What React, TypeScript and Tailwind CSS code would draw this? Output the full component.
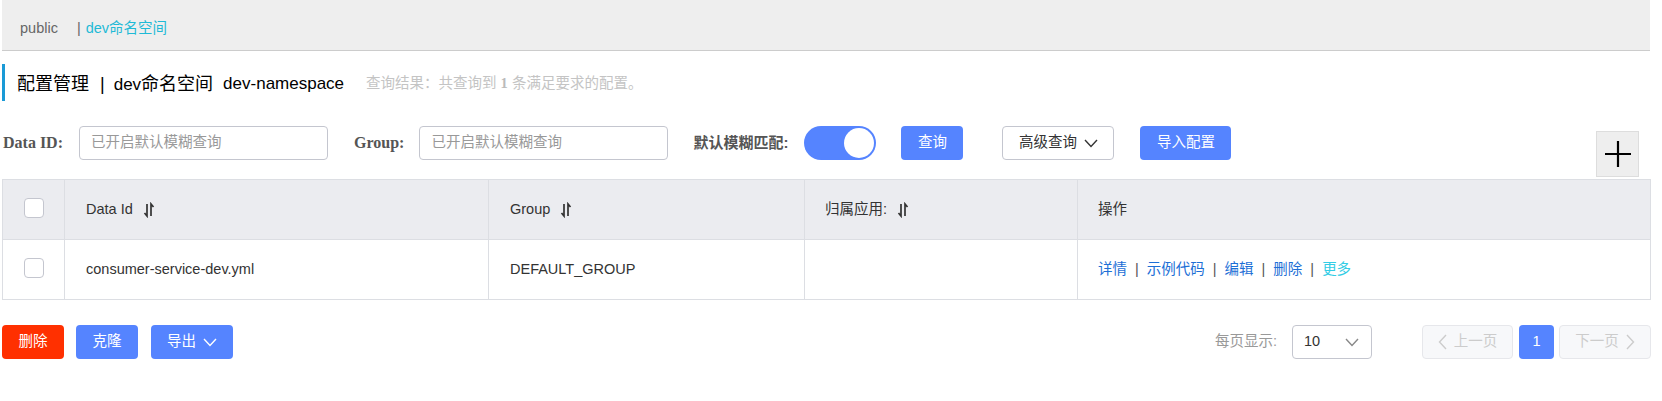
import React from "react";

const SortIcon = () => (
  <svg width="12" height="16" viewBox="0 0 12 16" className="inline-block ml-[10px]" fill="none">
    <path d="M4 2 V14 L1.5 11" stroke="#333" strokeWidth="1.7" />
    <path d="M8 14 V2 L10.5 5" stroke="#333" strokeWidth="1.7" />
  </svg>
);

const Chevron = ({ color = "#333", className = "" }: { color?: string; className?: string }) => (
  <svg width="14" height="9" viewBox="0 0 14 9" fill="none" className={className}>
    <path d="M1 1 L7 7.5 L13 1" stroke={color} strokeWidth="1.4" />
  </svg>
);

const Checkbox = () => (
  <div className="w-[20px] h-[20px] rounded-[4px] border border-[#c4c6cf] bg-white" />
);

const App: React.FC = () => {
  const links = ["详情", "示例代码", "编辑", "删除"];

  return (
    <div
      className="w-[1662px] h-[401px] bg-white text-[14.5px] text-[#333]"
      style={{ fontFamily: '"Liberation Sans", "Noto Sans CJK SC", sans-serif' }}
    >
      {/* namespace bar */}
      <div className="ml-[2px] w-[1648px] h-[51px] bg-[#eeeeee] border-b border-[#cccccc] flex items-center pl-[18px] pt-[7px]">
        <span className="text-[#666]">public</span>
        <span className="ml-[19px] text-[#666]">|</span>
        <span className="ml-[5px] text-[#1fbad6]">dev命名空间</span>
      </div>

      {/* title */}
      <div className="mt-[13px] ml-[2px] h-[37px] border-l-[3px] border-[#1a9ad6] flex items-center pl-[12px] pt-[3px]">
        <span className="text-[18px] text-black">配置管理</span>
        <span className="text-[18px] text-black ml-[11px]">|</span>
        <span className="text-[18px] text-black ml-[9px]">
          <span className="text-[17px]">dev</span>命名空间
        </span>
        <span className="text-[17px] text-black ml-[10px]">dev-namespace</span>
        <span className="ml-[22px] text-[14.5px] text-[#c4c4c4]">
          查询结果：共查询到 <b className="font-bold text-[#bbb]" style={{ fontFamily: '"Liberation Serif", serif' }}>1</b> 条满足要求的配置。
        </span>
      </div>

      {/* search row */}
      <div className="mt-[25px] h-[34px] flex items-start">
        <span
          className="ml-[3px] h-[34px] flex items-center font-bold text-[16px] text-[#555]"
          style={{ fontFamily: '"Liberation Serif", serif' }}
        >
          Data ID:
        </span>
        <div className="ml-[16px] w-[249px] h-[34px] rounded-[4px] border border-[#c4c6cf] flex items-center pl-[11px] text-[#999]">
          已开启默认模糊查询
        </div>
        <span
          className="ml-[26px] h-[34px] flex items-center font-bold text-[16px] text-[#555]"
          style={{ fontFamily: '"Liberation Serif", serif' }}
        >
          Group:
        </span>
        <div className="ml-[15px] w-[249px] h-[34px] rounded-[4px] border border-[#c4c6cf] flex items-center pl-[11px] text-[#999]">
          已开启默认模糊查询
        </div>
        <span className="ml-[25px] h-[34px] flex items-center font-bold text-[15px] text-[#555]">
          默认模糊匹配:
        </span>
        <div className="ml-[16px] w-[72px] h-[34px] rounded-full bg-[#5584ff] flex items-center justify-end pr-[2px]">
          <div className="w-[30px] h-[30px] rounded-full bg-white" />
        </div>
        <button className="ml-[25px] w-[62px] h-[34px] rounded-[4px] bg-[#5584ff] text-white">查询</button>
        <button className="ml-[39px] w-[112px] h-[34px] rounded-[4px] border border-[#c4c6cf] bg-white text-[#333] flex items-center justify-center gap-[7px]">
          高级查询
          <Chevron />
        </button>
        <button className="ml-[26px] w-[91px] h-[34px] rounded-[4px] bg-[#5584ff] text-white">导入配置</button>
        <div className="ml-auto mr-[23px] mt-[5px] w-[43px] h-[46px] bg-[#eeeeee] border border-[#dddddd] flex items-center justify-center">
          <svg width="28" height="28" viewBox="0 0 28 28">
            <path d="M14 1 V27 M1 14 H27" stroke="#000" strokeWidth="2.2" />
          </svg>
        </div>
      </div>

      {/* table */}
      <div className="mt-[19px] ml-[2px] w-[1649px] border border-[#dcdee3]">
        <div className="grid grid-cols-[61px_424px_316px_273px_1fr] h-[60px] bg-[#ebecf0] border-b border-[#dcdee3]">
          <div className="flex items-center justify-center pb-[4px]">
            <Checkbox />
          </div>
          <div className="border-l border-[#dcdee3] flex items-center pl-[21px]">
            Data Id <SortIcon />
          </div>
          <div className="border-l border-[#dcdee3] flex items-center pl-[21px]">
            Group <SortIcon />
          </div>
          <div className="border-l border-[#dcdee3] flex items-center pl-[20px]">
            归属应用: <SortIcon />
          </div>
          <div className="border-l border-[#dcdee3] flex items-center pl-[20px]">操作</div>
        </div>
        <div className="grid grid-cols-[61px_424px_316px_273px_1fr] h-[59px] bg-white">
          <div className="flex items-center justify-center pb-[4px]">
            <Checkbox />
          </div>
          <div className="border-l border-[#dcdee3] flex items-center pl-[21px]">consumer-service-dev.yml</div>
          <div className="border-l border-[#dcdee3] flex items-center pl-[21px]">DEFAULT_GROUP</div>
          <div className="border-l border-[#dcdee3]" />
          <div className="border-l border-[#dcdee3] flex items-center pl-[20px]">
            {links.map((l) => (
              <React.Fragment key={l}>
                <span className="text-[#1d6fd6]">{l}</span>
                <span className="mx-[8px] text-[#555]">|</span>
              </React.Fragment>
            ))}
            <span className="text-[#33cde5]">更多</span>
          </div>
        </div>
      </div>

      {/* footer */}
      <div className="mt-[25px] h-[34px] flex items-center">
        <button className="ml-[2px] w-[62px] h-[34px] rounded-[4px] bg-[#ff3000] text-white">删除</button>
        <button className="ml-[12px] w-[62px] h-[34px] rounded-[4px] bg-[#5584ff] text-white">克隆</button>
        <button className="ml-[13px] w-[82px] h-[34px] rounded-[4px] bg-[#5584ff] text-white flex items-center justify-center gap-[7px]">
          导出
          <Chevron color="#fff" />
        </button>

        <span className="ml-auto text-[#999]">每页显示:</span>
        <div className="ml-[15px] w-[80px] h-[34px] rounded-[4px] border border-[#c4c6cf] flex items-center justify-between pl-[11px] pr-[12px] text-[#333]">
          10
          <Chevron color="#888" />
        </div>
        <div className="ml-[50px] w-[91px] h-[34px] rounded-[4px] border border-[#e6e7eb] bg-[#f7f8fa] flex items-center justify-center gap-[7px] text-[#ccc]">
          <svg width="9" height="16" viewBox="0 0 9 16" fill="none">
            <path d="M8 1 L1.5 8 L8 15" stroke="#ccc" strokeWidth="1.4" />
          </svg>
          上一页
        </div>
        <div className="ml-[6px] w-[35px] h-[34px] rounded-[4px] bg-[#5584ff] text-white flex items-center justify-center">1</div>
        <div className="ml-[5px] mr-[11px] w-[92px] h-[34px] rounded-[4px] border border-[#e6e7eb] bg-[#f7f8fa] flex items-center justify-center gap-[7px] text-[#ccc]">
          下一页
          <svg width="9" height="16" viewBox="0 0 9 16" fill="none">
            <path d="M1 1 L7.5 8 L1 15" stroke="#ccc" strokeWidth="1.4" />
          </svg>
        </div>
      </div>
    </div>
  );
};

export default App;
